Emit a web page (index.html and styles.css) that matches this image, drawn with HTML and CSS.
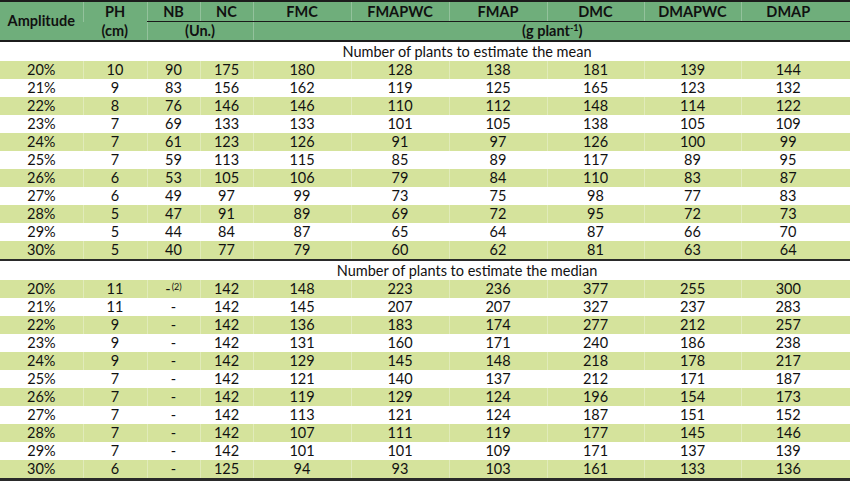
FILE: index.html
```html
<!DOCTYPE html>
<html>
<head>
<meta charset="utf-8">
<link rel="stylesheet" href="styles.css">
</head>
<body>
<table class="tbl">
  <colgroup>
    <col class="c-amp"><col class="c-ph"><col class="c-nb"><col class="c-nc">
    <col class="c-w"><col class="c-w"><col class="c-w"><col class="c-w2"><col class="c-w2"><col class="c-last">
  </colgroup>
  <thead>
    <tr class="h1">
      <th rowspan="2" class="amp">Amplitude</th>
      <th>PH</th>
      <th class="ul">NB</th>
      <th class="ul">NC</th>
      <th class="ul">FMC</th>
      <th class="ul">FMAPWC</th>
      <th class="ul">FMAP</th>
      <th class="ul">DMC</th>
      <th class="ul">DMAPWC</th>
      <th class="ul endc">DMAP</th>
    </tr>
    <tr class="h2">
      <th>(cm)</th>
      <th colspan="2">(Un.)</th>
      <th colspan="6" class="unit">(g plant<sup>-1</sup>)</th>
    </tr>
  </thead>
  <tbody id="mean">
    <tr class="title"><td></td><td colspan="9">Number of plants to estimate the mean</td></tr>
    <tr class="g"><td>20%</td><td>10</td><td>90</td><td>175</td><td>180</td><td>128</td><td>138</td><td>181</td><td>139</td><td>144</td></tr>
    <tr><td>21%</td><td>9</td><td>83</td><td>156</td><td>162</td><td>119</td><td>125</td><td>165</td><td>123</td><td>132</td></tr>
    <tr class="g"><td>22%</td><td>8</td><td>76</td><td>146</td><td>146</td><td>110</td><td>112</td><td>148</td><td>114</td><td>122</td></tr>
    <tr><td>23%</td><td>7</td><td>69</td><td>133</td><td>133</td><td>101</td><td>105</td><td>138</td><td>105</td><td>109</td></tr>
    <tr class="g"><td>24%</td><td>7</td><td>61</td><td>123</td><td>126</td><td>91</td><td>97</td><td>126</td><td>100</td><td>99</td></tr>
    <tr><td>25%</td><td>7</td><td>59</td><td>113</td><td>115</td><td>85</td><td>89</td><td>117</td><td>89</td><td>95</td></tr>
    <tr class="g"><td>26%</td><td>6</td><td>53</td><td>105</td><td>106</td><td>79</td><td>84</td><td>110</td><td>83</td><td>87</td></tr>
    <tr><td>27%</td><td>6</td><td>49</td><td>97</td><td>99</td><td>73</td><td>75</td><td>98</td><td>77</td><td>83</td></tr>
    <tr class="g"><td>28%</td><td>5</td><td>47</td><td>91</td><td>89</td><td>69</td><td>72</td><td>95</td><td>72</td><td>73</td></tr>
    <tr><td>29%</td><td>5</td><td>44</td><td>84</td><td>87</td><td>65</td><td>64</td><td>87</td><td>66</td><td>70</td></tr>
    <tr class="g last"><td>30%</td><td>5</td><td>40</td><td>77</td><td>79</td><td>60</td><td>62</td><td>81</td><td>63</td><td>64</td></tr>
  </tbody>
  <tbody id="median">
    <tr class="title"><td></td><td colspan="9">Number of plants to estimate the median</td></tr>
    <tr class="g"><td>20%</td><td>11</td><td>-<sup class="note">(2)</sup></td><td>142</td><td>148</td><td>223</td><td>236</td><td>377</td><td>255</td><td>300</td></tr>
    <tr><td>21%</td><td>11</td><td>-</td><td>142</td><td>145</td><td>207</td><td>207</td><td>327</td><td>237</td><td>283</td></tr>
    <tr class="g"><td>22%</td><td>9</td><td>-</td><td>142</td><td>136</td><td>183</td><td>174</td><td>277</td><td>212</td><td>257</td></tr>
    <tr><td>23%</td><td>9</td><td>-</td><td>142</td><td>131</td><td>160</td><td>171</td><td>240</td><td>186</td><td>238</td></tr>
    <tr class="g"><td>24%</td><td>9</td><td>-</td><td>142</td><td>129</td><td>145</td><td>148</td><td>218</td><td>178</td><td>217</td></tr>
    <tr><td>25%</td><td>7</td><td>-</td><td>142</td><td>121</td><td>140</td><td>137</td><td>212</td><td>171</td><td>187</td></tr>
    <tr class="g"><td>26%</td><td>7</td><td>-</td><td>142</td><td>119</td><td>129</td><td>124</td><td>196</td><td>154</td><td>173</td></tr>
    <tr><td>27%</td><td>7</td><td>-</td><td>142</td><td>113</td><td>121</td><td>124</td><td>187</td><td>151</td><td>152</td></tr>
    <tr class="g"><td>28%</td><td>7</td><td>-</td><td>142</td><td>107</td><td>111</td><td>119</td><td>177</td><td>145</td><td>146</td></tr>
    <tr><td>29%</td><td>7</td><td>-</td><td>142</td><td>101</td><td>101</td><td>109</td><td>171</td><td>137</td><td>139</td></tr>
    <tr class="g last"><td>30%</td><td>6</td><td>-</td><td>125</td><td>94</td><td>93</td><td>103</td><td>161</td><td>133</td><td>136</td></tr>
  </tbody>
</table>
</body>
</html>
```
FILE: styles.css
```css
html, body {
  margin: 0;
  padding: 0;
  background: #ffffff;
}
body {
  width: 850px;
  height: 482px;
  overflow: hidden;
}
.tbl {
  width: 850px;
  border-collapse: collapse;
  table-layout: fixed;
  font-family: Lato, "Open Sans", "Liberation Sans", sans-serif;
  font-size: 14.5px;
  color: #111111;
  border-top: 2px solid #1c1c1c;
  border-bottom: 3px solid #2a2a2a;
}
.c-amp { width: 83px; }
.c-ph { width: 64px; }
.c-nb { width: 53px; }
.c-nc { width: 53px; }
.c-w { width: 98px; }
.c-w2 { width: 97px; }
.c-last { width: 110px; }

thead th {
  background: #6fae7b;
  font-weight: 700;
  padding: 0;
  text-align: center;
  vertical-align: middle;
  line-height: 18px;
  height: 19px;
  border-left: 1px solid rgba(255,255,255,0.25);
}
thead th:first-child { border-left: none; }
.h1 th.ul { border-bottom: 1px solid #1a1a1a; }
.h1 th.endc { padding-right: 16px; }
.h2 th { border-bottom: 2px solid #1c1c1c; }
.h2 th { height: 18px; }
thead .amp { border-bottom: 2px solid #1c1c1c; border-left: none; }
.unit { text-align: center; }
sup {
  font-size: 9px;
  line-height: 0;
  vertical-align: 5px;
}
sup.note { vertical-align: 4px; margin-left: 1px; }

tbody td {
  padding: 0;
  text-align: center;
  height: 18px;
  line-height: 18px;
}
tbody tr:not(.title) td:last-child { padding-right: 16px; }
tbody tr.title td {
  height: 19px;
  line-height: 19px;
  background: #ffffff;
}
tbody tr.g td {
  background: #d5e39c;
  border-left: 1px solid rgba(255,255,255,0.3);
}
tbody tr.g td:first-child { border-left: none; }
#mean tr.last td { border-bottom: 2px solid #2a2a2a; }
```
